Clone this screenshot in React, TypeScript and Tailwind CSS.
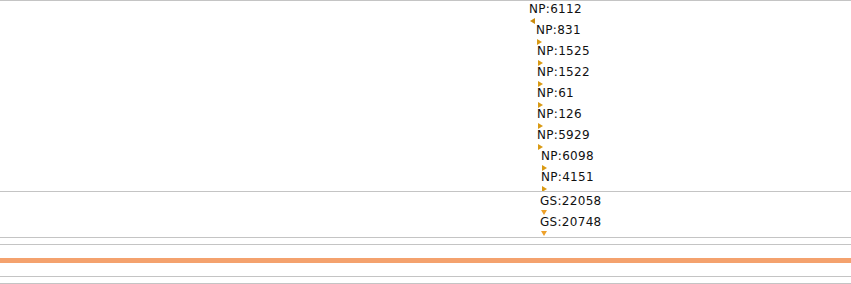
type Feature = {
  label: string;
  x: number;
  y: number;
  dir: "left" | "right" | "down";
};

// NP track features (y = text center inside the track)
const npFeatures: Feature[] = [
  { label: "NP:6112", x: 529, y: 8, dir: "left" },
  { label: "NP:831", x: 536, y: 29, dir: "right" },
  { label: "NP:1525", x: 537, y: 50, dir: "right" },
  { label: "NP:1522", x: 537, y: 71, dir: "right" },
  { label: "NP:61", x: 537, y: 92, dir: "right" },
  { label: "NP:126", x: 537, y: 113, dir: "right" },
  { label: "NP:5929", x: 537, y: 134, dir: "right" },
  { label: "NP:6098", x: 541, y: 155, dir: "right" },
  { label: "NP:4151", x: 541, y: 176, dir: "right" },
];

const gsFeatures: Feature[] = [
  { label: "GS:22058", x: 540, y: 9, dir: "down" },
  { label: "GS:20748", x: 540, y: 30, dir: "down" },
];

function Marker({ dir }: { dir: Feature["dir"] }) {
  if (dir === "left") {
    return (
      <svg width="6" height="6" viewBox="0 0 6 6">
        <polygon points="0,3 5,0 5,6" fill="#c98a0c" />
      </svg>
    );
  }
  if (dir === "down") {
    return (
      <svg width="6" height="5" viewBox="0 0 6 5">
        <polygon points="0,0 6,0 3,5" fill="#eea12a" />
      </svg>
    );
  }
  return (
    <svg width="5" height="6" viewBox="0 0 5 6">
      <polygon points="0,0 5,3 0,6" fill="#d99a14" />
    </svg>
  );
}

function FeatureLabel({ f }: { f: Feature }) {
  return (
    <div className="absolute flex flex-col items-start" style={{ left: f.x, top: f.y - 7 }}>
      <span className="text-[12px] leading-[14px] tracking-[0.3px] text-[#111] whitespace-nowrap">{f.label}</span>
      <div className="ml-px mt-[2px]">
        <Marker dir={f.dir} />
      </div>
    </div>
  );
}

export default function App() {
  return (
    <div
      className="w-[851px] h-[284px] bg-white overflow-hidden flex flex-col"
      style={{ fontFamily: '"DejaVu Sans", sans-serif' }}
    >
      {/* NP track */}
      <div className="relative h-[191px] border-t border-[#c4c4c4] shrink-0">
        {npFeatures.map((f) => (
          <FeatureLabel key={f.label} f={f} />
        ))}
      </div>
      {/* GS track */}
      <div className="relative h-[46px] border-t border-[#c4c4c4] shrink-0">
        {gsFeatures.map((f) => (
          <FeatureLabel key={f.label} f={f} />
        ))}
      </div>
      <div className="h-[7px] border-t border-[#c4c4c4] shrink-0" />
      <div className="h-[32px] border-t border-[#c4c4c4] shrink-0 flex flex-col">
        <div className="h-[13px]" />
        <div className="h-[5px] bg-[#f4a26e]" />
      </div>
      <div className="h-[7px] border-t border-[#c4c4c4] shrink-0" />
      <div className="h-[1px] border-t border-[#c4c4c4] shrink-0" />
    </div>
  );
}
